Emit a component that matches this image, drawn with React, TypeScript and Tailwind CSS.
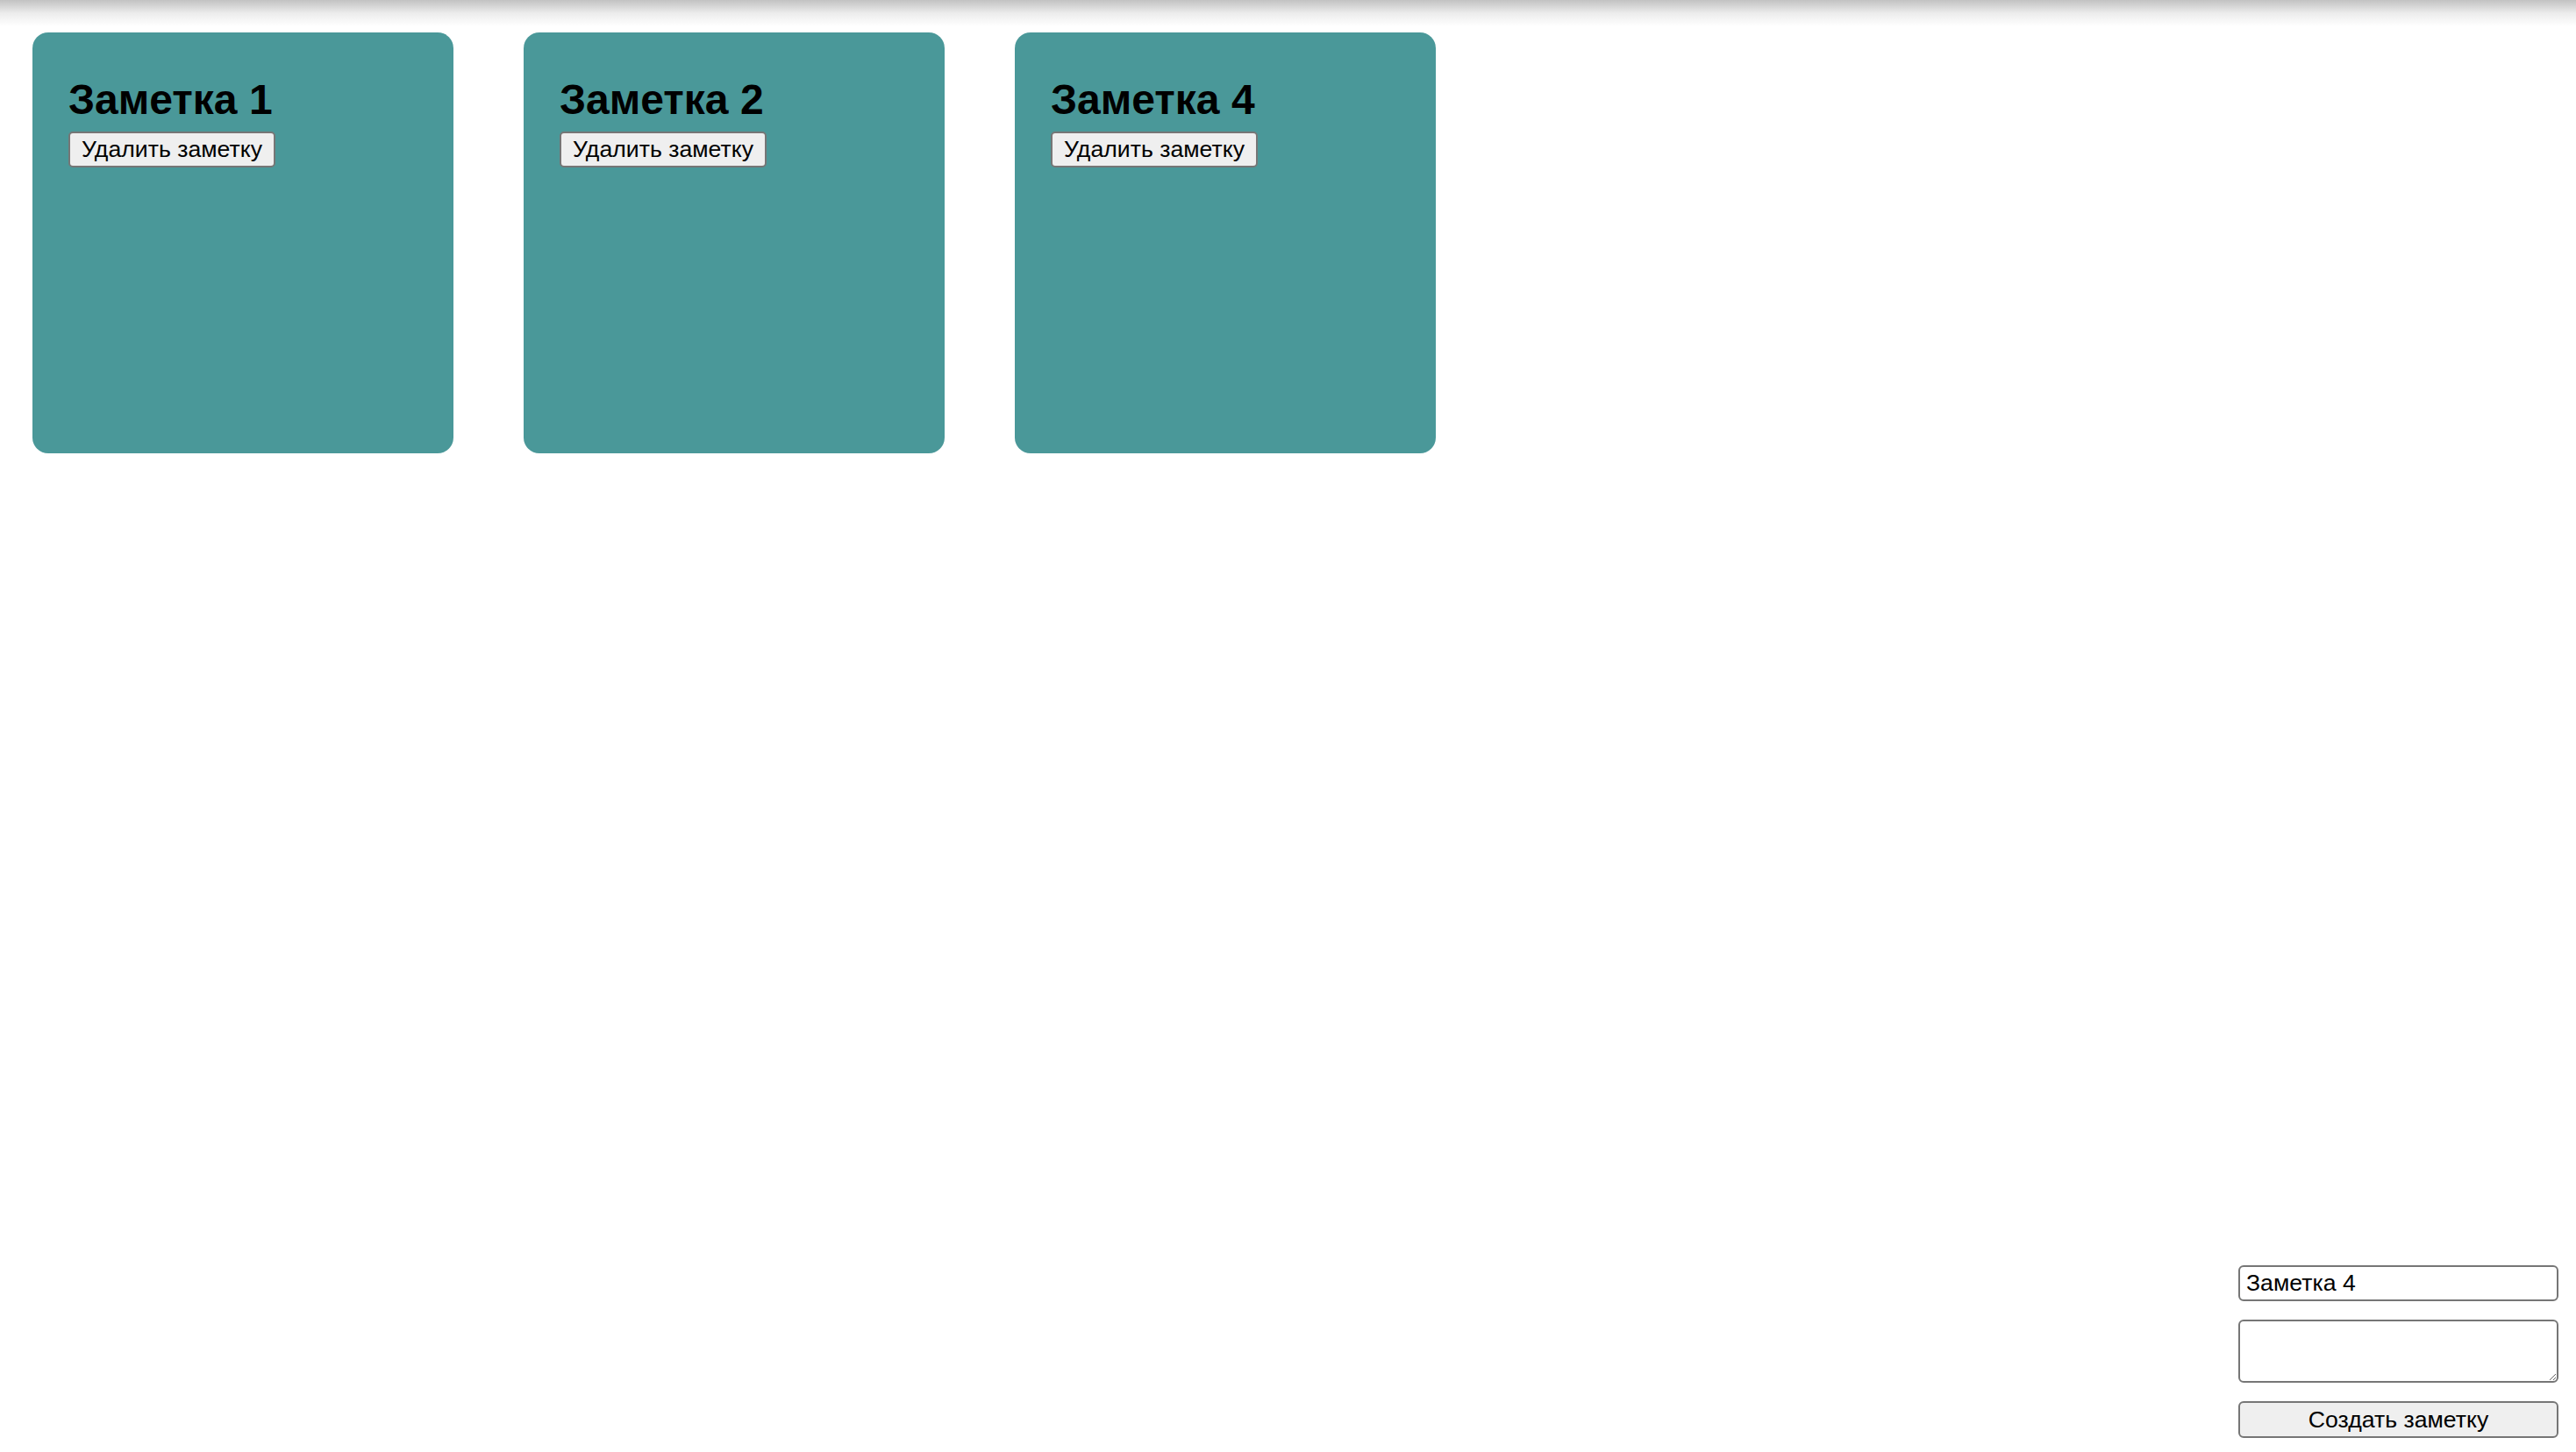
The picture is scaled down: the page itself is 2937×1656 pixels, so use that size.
import React, { useState } from 'react';

interface Note {
  id: number;
  title: string;
}

const initialNotes: Note[] = [
  { id: 1, title: 'Заметка 1' },
  { id: 2, title: 'Заметка 2' },
  { id: 4, title: 'Заметка 4' },
];

const NoteCard: React.FC<{ note: Note; onDelete: (id: number) => void }> = ({ note, onDelete }) => {
  return (
    <div className="w-[480px] h-[480px] shrink-0 rounded-[18px] bg-[#4a9899] pl-[41px] pt-[49px] flex flex-col items-start">
      <h2 className="text-[48px] leading-[55px] font-bold text-black">{note.title}</h2>
      <button
        onClick={() => onDelete(note.id)}
        className="mt-[9px] w-[236px] h-[41px] rounded-[5px] border-2 border-[#767676] bg-[#efefef] text-[26.67px] leading-none text-black"
      >
        Удалить заметку
      </button>
    </div>
  );
};

const App: React.FC = () => {
  const [notes, setNotes] = useState<Note[]>(initialNotes);
  const [title, setTitle] = useState('Заметка 4');
  const [body, setBody] = useState('');

  const deleteNote = (id: number) => setNotes((n) => n.filter((x) => x.id !== id));

  const createNote = () => {
    setNotes((n) => [...n, { id: Date.now(), title }]);
  };

  return (
    <div
      className="relative h-screen w-full bg-white flex flex-col justify-between overflow-hidden"
      style={{ fontFamily: '"Liberation Sans", Arial, sans-serif' }}
    >
      {/* top shadow */}
      <div className="pointer-events-none absolute top-0 left-0 right-0 h-[30px] bg-gradient-to-b from-[#c2c2c2] via-[#ececec] to-white/0" />

      {/* Notes */}
      <div className="flex gap-[80px] pl-[37px] pt-[37px]">
        {notes.map((note) => (
          <NoteCard key={note.id} note={note} onDelete={deleteNote} />
        ))}
      </div>

      {/* Create form */}
      <div className="self-end mr-[20px] mb-[16px] w-[365px] flex flex-col gap-[21px]">
        <input
          value={title}
          onChange={(e) => setTitle(e.target.value)}
          className="h-[41px] w-full rounded-[6px] border-2 border-[#767676] bg-white px-[7px] text-[26.67px] text-black outline-none"
        />
        <textarea
          value={body}
          onChange={(e) => setBody(e.target.value)}
          className="h-[72px] w-full rounded-[6px] border-2 border-[#767676] bg-white px-[7px] text-[26.67px] text-black outline-none"
        />
        <button
          onClick={createNote}
          className="h-[42px] w-full rounded-[6px] border-2 border-[#767676] bg-[#efefef] text-[26.67px] leading-none text-black"
        >
          Создать заметку
        </button>
      </div>
    </div>
  );
};

export default App;
